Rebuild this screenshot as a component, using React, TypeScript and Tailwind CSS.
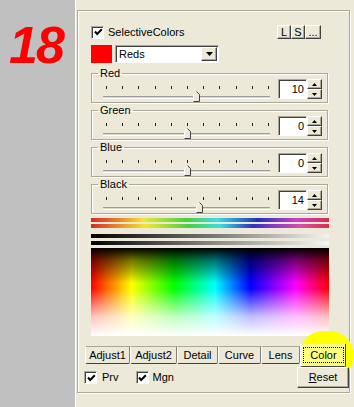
import React from "react";

const RAISED =
  "bg-[#ece9d8] border border-t-white border-l-white border-r-[#404040] border-b-[#404040] shadow-[inset_-1px_-1px_0_#aca899]";
const SUNKEN =
  "border border-t-[#aca899] border-l-[#aca899] border-r-white border-b-white shadow-[inset_1px_1px_0_#404040]";

function CheckBox() {
  return (
    <div className={`w-[13px] h-[13px] shrink-0 bg-white ${SUNKEN} flex items-center justify-center`}>
      <svg width="9" height="9" viewBox="0 0 9 9" className="ml-[1px] mt-[1px]">
        <polyline points="1,3.5 3.2,6 7.8,1.3" fill="none" stroke="#000" strokeWidth="2" />
      </svg>
    </div>
  );
}

function Thumb() {
  return (
    <svg width="7" height="11" viewBox="0 0 7 11">
      <polygon points="0.5,3.5 3.5,0.5 6.5,3.5 6.5,10.5 0.5,10.5" fill="#ece9d8" />
      <polyline points="0.5,10.5 0.5,3.5 3.5,0.5" fill="none" stroke="#fff" />
      <polyline points="3.5,0.5 6.5,3.5 6.5,10.5 0.5,10.5" fill="none" stroke="#404040" />
    </svg>
  );
}

function Spin({ value }: { value: number }) {
  return (
    <div className="flex ml-[8px]">
      <div className={`w-[29px] h-[20px] bg-white ${SUNKEN} flex items-center justify-end pr-[2px] leading-none`}>
        {value}
      </div>
      <div className="flex flex-col w-[15px] h-[20px]">
        <div className={`h-[10px] ${RAISED} flex items-center justify-center`}>
          <svg width="5" height="3" viewBox="0 0 5 3">
            <polygon points="2.5,0 5,3 0,3" fill="#000" />
          </svg>
        </div>
        <div className={`h-[10px] ${RAISED} flex items-center justify-center`}>
          <svg width="5" height="3" viewBox="0 0 5 3">
            <polygon points="0,0 5,0 2.5,3" fill="#000" />
          </svg>
        </div>
      </div>
    </div>
  );
}

const TICKS = [0, 1, 2, 3, 4, 5, 6, 7, 8, 9, 10];

function Group({ label, value, first }: { label: string; value: number; first?: boolean }) {
  const center = 84 + value * 0.85;
  return (
    <fieldset
      className={`${first ? "mt-[5px]" : "mt-[2px]"} w-[237px] min-w-0 border border-[#aca899] shadow-[inset_1px_1px_0_#fff,1px_1px_0_#fff]`}
    >
      <legend className="ml-[6px] px-[2px] leading-[11px] h-[11px]">{label}</legend>
      <div className="flex h-[23px]">
        <div className="relative w-[167px] ml-[11px]">
          <div className="flex justify-between pl-[3px] pr-[1px] pt-[7px]">
            {TICKS.map((i) => (
              <div key={i} className="w-[1px] h-[3px] bg-[#222]" />
            ))}
          </div>
          <div className="mt-[7px] h-[3px] border-t border-t-[#9d9c99] border-b border-b-white bg-[#dcd9c8]" />
          <div className="absolute top-[12px]" style={{ left: Math.round(center - 3) }}>
            <Thumb />
          </div>
        </div>
        <Spin value={value} />
      </div>
    </fieldset>
  );
}

function Tab({ label, w }: { label: string; w: number }) {
  return (
    <div
      className="relative z-[2] mt-[2px] h-[18px] bg-[#ece9d8] border-t border-t-[#aca899] border-l border-l-white border-r border-r-[#808080] border-b border-b-[#404040] rounded-b-[2px] flex items-center justify-center leading-none"
      style={{ width: w }}
    >
      {label}
    </div>
  );
}

export default function App() {
  return (
    <div className="relative w-[354px] h-[407px] flex bg-[#ece9d8] overflow-hidden font-['Liberation_Sans',Arial,sans-serif] text-[11px] text-black">
      <div className="w-[75px] shrink-0 bg-[#c0c0c0] pl-[9px] pt-[19px]">
        <div className="text-[52px] leading-none font-bold italic text-[#ff0000] tracking-[-2px]">18</div>
      </div>
      <div className="flex-1 border-l border-l-white">
        <div className="ml-[1px] mr-[4px] mt-[10px] h-[383px] border border-[#aca899] shadow-[inset_1px_1px_0_#fff,1px_1px_0_#fff] flex flex-col">
          <div className="pl-[13px] pt-[14px] flex flex-col">
            <div className="w-[238px] h-[14px] flex items-center">
              <CheckBox />
              <span className="ml-[4px]">SelectiveColors</span>
              <div className="ml-auto mr-[8px] flex">
                <div className={`w-[14px] h-[14px] ${RAISED} flex items-center justify-center leading-none`}>L</div>
                <div className={`w-[14px] h-[14px] ${RAISED} flex items-center justify-center leading-none`}>S</div>
                <div className={`w-[16px] h-[14px] ${RAISED} flex items-center justify-center leading-none`}>...</div>
              </div>
            </div>
            <div className="mt-[6px] flex h-[18px]">
              <div className="w-[21px] h-[18px] bg-[#ff0000]" />
              <div className={`ml-[3px] w-[104px] h-[18px] bg-white ${SUNKEN} flex items-center`}>
                <span className="flex-1 pl-[3px] leading-none">Reds</span>
                <div className={`w-[16px] h-[14px] mr-[1px] ${RAISED} flex items-center justify-center`}>
                  <svg width="7" height="4" viewBox="0 0 7 4">
                    <polygon points="0,0 7,0 3.5,4" fill="#000" />
                  </svg>
                </div>
              </div>
            </div>
            <Group label="Red" value={10} first />
            <Group label="Green" value={0} />
            <Group label="Blue" value={0} />
            <Group label="Black" value={14} />
            <div className="mt-[4px] w-[238px] h-[4px] bg-[linear-gradient(to_right,#d82828_0%,#e88828_12%,#f0e830_22%,#48d040_40%,#38e0e0_53%,#2030b8_70%,#c840c8_86%,#d83048_100%)]" />
            <div className="mt-[2px] w-[238px] h-[4px] bg-[linear-gradient(to_right,#d82828_0%,#e89028_12%,#f0e830_23%,#48d040_41%,#38e0e0_54%,#3030c0_68%,#9040c0_78%,#d850a8_88%,#d83048_100%)]" />
            <div className="mt-[6px] w-[238px] h-[4px] bg-[linear-gradient(to_right,#000_0%,#808080_55%,#f4f4f4_100%)]" />
            <div className="mt-[3px] w-[238px] h-[4px] bg-[linear-gradient(to_right,#000_0%,#909090_55%,#f8f8f8_100%)]" />
            <div className="mt-[3px] w-[238px] h-[88px] bg-[image:linear-gradient(to_bottom,#000_0%,rgba(0,0,0,0.55)_14%,rgba(0,0,0,0)_40%,rgba(255,255,255,0)_46%,rgba(255,255,255,0.75)_78%,#fff_100%),linear-gradient(to_right,#f00_0%,#ff0_17%,#0f0_35%,#0ff_52%,#00f_67%,#f0f_86%,#f00_100%)]" />
          </div>
          <div className="mt-[8px] pl-[7px] flex items-start h-[23px]">
            <Tab label="Adjust1" w={45} />
            <Tab label="Adjust2" w={47} />
            <Tab label="Detail" w={41} />
            <Tab label="Curve" w={43} />
            <Tab label="Lens" w={39} />
            <div className="relative z-[2] w-[46px] h-[23px] bg-white/50 border-l border-l-white border-r border-r-[#404040] border-b border-b-[#404040] rounded-b-[2px] pl-[2px] pt-[3px]">
              <div className="w-[41px] h-[16px] border border-dotted border-black flex items-center justify-center leading-none">
                Color
              </div>
            </div>
          </div>
          <div className="pl-[6px] flex items-center h-[21px]">
            <CheckBox />
            <span className="ml-[5px]">Prv</span>
            <div className="ml-[17px]">
              <CheckBox />
            </div>
            <span className="ml-[4px]">Mgn</span>
            <div className={`relative z-[2] ml-auto w-[52px] h-[21px] ${RAISED} flex items-center justify-center leading-none`}>
              <span>
                <span className="underline">R</span>eset
              </span>
            </div>
          </div>
        </div>
      </div>
      <div className="absolute left-[299px] top-[331px] w-[55px] h-[49px] rounded-full bg-[#ffff00] z-[1]" />
    </div>
  );
}
